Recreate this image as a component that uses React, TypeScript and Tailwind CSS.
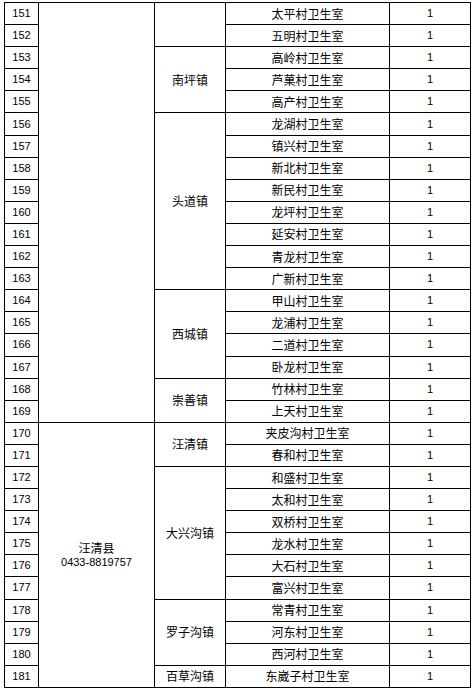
import React from 'react';

type Row = {
  no: number;
  clinic: string;
  town?: { name: string; span: number } | null;
  county?: { name: string; phone: string; span: number } | null;
  head?: boolean;
};

const clinics = [
  '太平村卫生室',
  '五明村卫生室',
  '高岭村卫生室',
  '芦菓村卫生室',
  '高产村卫生室',
  '龙湖村卫生室',
  '镇兴村卫生室',
  '新北村卫生室',
  '新民村卫生室',
  '龙坪村卫生室',
  '延安村卫生室',
  '青龙村卫生室',
  '广新村卫生室',
  '甲山村卫生室',
  '龙浦村卫生室',
  '二道村卫生室',
  '卧龙村卫生室',
  '竹林村卫生室',
  '上天村卫生室',
  '夹皮沟村卫生室',
  '春和村卫生室',
  '和盛村卫生室',
  '太和村卫生室',
  '双桥村卫生室',
  '龙水村卫生室',
  '大石村卫生室',
  '富兴村卫生室',
  '常青村卫生室',
  '河东村卫生室',
  '西河村卫生室',
  '东崴子村卫生室',
];

// town groups keyed by first row number
const towns: Record<number, { name: string; span: number }> = {
  151: { name: '', span: 2 },
  153: { name: '南坪镇', span: 3 },
  156: { name: '头道镇', span: 8 },
  164: { name: '西城镇', span: 4 },
  168: { name: '崇善镇', span: 2 },
  170: { name: '汪清镇', span: 2 },
  172: { name: '大兴沟镇', span: 6 },
  178: { name: '罗子沟镇', span: 3 },
  181: { name: '百草沟镇', span: 1 },
};

const counties: Record<number, { name: string; phone: string; span: number }> = {
  151: { name: '', phone: '', span: 19 },
  170: { name: '汪清县', phone: '0433-8819757', span: 12 },
};

const rows: Row[] = clinics.map((clinic, i) => ({
  no: 151 + i,
  clinic,
  town: towns[151 + i] ?? null,
  county: counties[151 + i] ?? null,
}));

const cjk = "font-['Noto_Sans_CJK_SC',sans-serif] text-[12px] leading-none text-black";
const num = "font-['Liberation_Sans',Arial,sans-serif] text-[11px] leading-none text-black";

export default function App() {
  return (
    <div className="w-[474px] h-[691px] bg-white overflow-hidden">
      <table className="ml-[4px] mt-[2px] w-[466px] table-fixed border-collapse">
        <colgroup>
          <col className="w-[34px]" />
          <col className="w-[116px]" />
          <col className="w-[71px]" />
          <col className="w-[164px]" />
          <col className="w-[81px]" />
        </colgroup>
        <tbody>
          {rows.map((r) => (
            <tr key={r.no} className="h-[22.1px]">
              <td className={`border border-black p-0 text-center ${num}`}>{r.no}</td>
              {r.county && (
                <td rowSpan={r.county.span} className="border border-black p-0 text-center align-middle">
                  {r.county.name && (
                    <div className="flex flex-col items-center gap-[3px]">
                      <span className={cjk}>{r.county.name}</span>
                      <span className={num}>{r.county.phone}</span>
                    </div>
                  )}
                </td>
              )}
              {r.town && (
                <td rowSpan={r.town.span} className={`border border-black p-0 text-center align-middle ${cjk}`}>
                  {r.town.name}
                </td>
              )}
              <td className={`border border-black p-0 text-center ${cjk}`}>{r.clinic}</td>
              <td className={`border border-black p-0 text-center ${num}`}>1</td>
            </tr>
          ))}
        </tbody>
      </table>
    </div>
  );
}
